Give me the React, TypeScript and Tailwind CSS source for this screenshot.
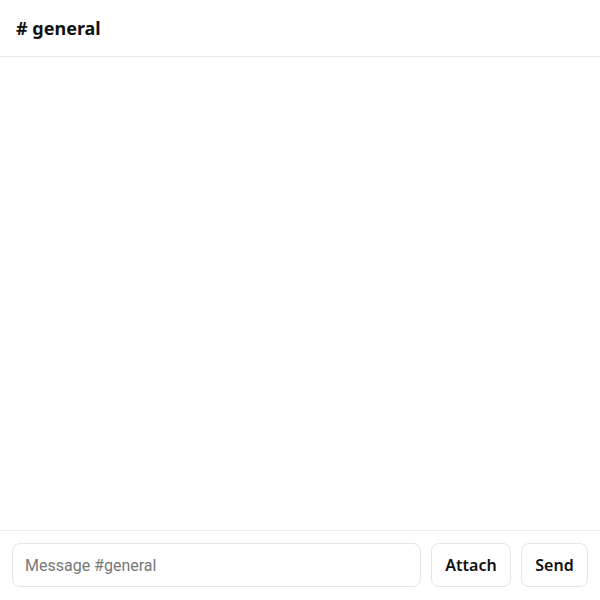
export default function App() {
  return (
    <div className="flex h-[600px] w-[600px] flex-col bg-white font-['Noto_Sans',sans-serif] text-[#111]">
      <header className="flex h-[57px] shrink-0 items-center border-b border-[#e8e8e8] px-4">
        <h1 className="text-[18px] font-bold">
          # general
        </h1>
      </header>
      <main className="flex-1 bg-[#fefefe]" />
      <footer className="flex shrink-0 gap-2.5 border-t border-[#ececec] px-3 pt-3 pb-[13px]">
        <input
          className="h-11 flex-1 rounded-lg border border-[#e5e5e5] px-3 font-['Roboto',sans-serif] text-[16px] outline-none placeholder:text-[#777]"
          placeholder="Message #general"
        />
        <button className="flex h-11 w-20 items-center justify-center rounded-lg border border-[#e5e5e5] bg-white text-[16px] font-semibold">
          Attach
        </button>
        <button className="flex h-11 w-[67px] items-center justify-center rounded-lg border border-[#e5e5e5] bg-white text-[16px] font-semibold">
          Send
        </button>
      </footer>
    </div>
  );
}
